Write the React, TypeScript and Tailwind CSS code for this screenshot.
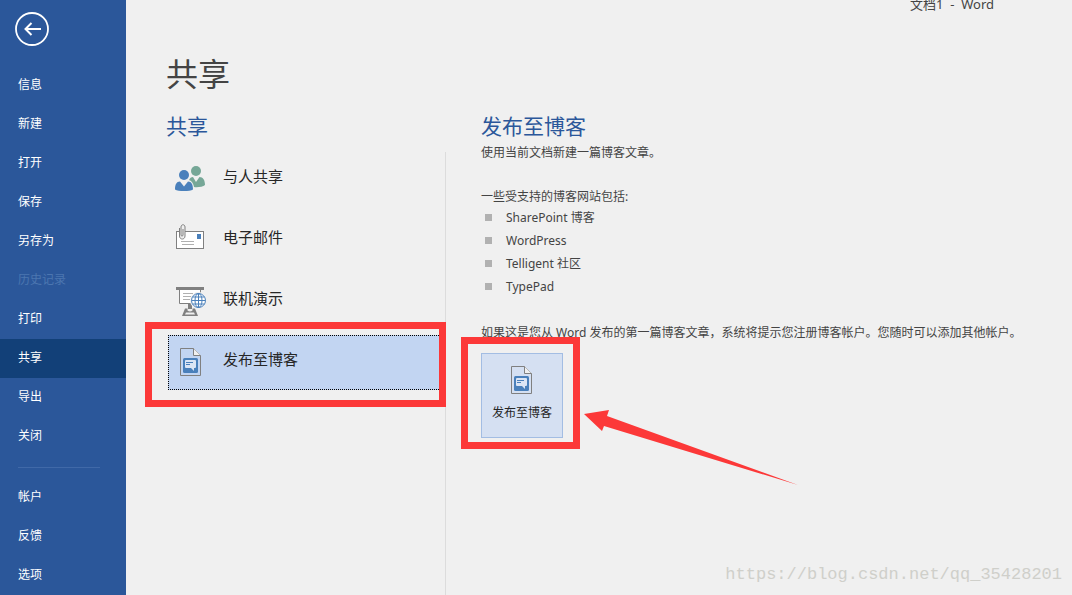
import type { ReactNode } from 'react';

const mainMenu = ['信息', '新建', '打开', '保存', '另存为', '历史记录', '打印', '共享', '导出', '关闭'];
const accountMenu = ['帐户', '反馈', '选项'];
const blogSites = ['SharePoint 博客', 'WordPress', 'Telligent 社区', 'TypePad'];

function PeopleIcon() {
  return (
    <svg viewBox="0 0 32 31" className="w-8 h-[31px]" aria-hidden="true">
      <g fill="#76a797">
        <circle cx="21" cy="7" r="5" />
        <path d="M14 16c1-2 2-3 4-3l3 5 3.500-5c3.500 0 5.500 3 5.500 8-2 2-8 2.500-11 2-.5-3-2-6-5-7z" />
      </g>
      <circle cx="9" cy="11" r="5.800" fill="#f0f0f0" />
      <g fill="#4a80bb">
        <circle cx="9" cy="11" r="5" />
        <path d="M5 17.500l4 5 4-5c3.500 0 5 3 5 8-3 2-15 2-18 0 0-5 1.500-8 5-8z" />
      </g>
    </svg>
  );
}

function MailIcon() {
  return (
    <svg viewBox="0 0 32 31" className="w-8 h-[31px] overflow-visible" fill="none" aria-hidden="true">
      <rect x="1.500" y="6.500" width="27" height="17" fill="#fff" stroke="#808080" />
      <rect x="22" y="9" width="4" height="5" fill="#4a80bb" />
      <path d="M6 16.500h13M7 19.500h12" stroke="#b0b0b0" />
      <path d="M4 1h6v12h-6z" fill="#f0f0f0" />
      <path d="M4.500 3v8c0 4 5.500 4 5.500 0V2c0-3-4-3-4 0v8c0 1.500 2 1.500 2 0V4" stroke="#808080" />
    </svg>
  );
}

function PresentIcon() {
  return (
    <svg viewBox="0 0 32 31" className="w-8 h-[31px]" fill="none" aria-hidden="true">
      <path d="M4.500 4v13.500h21V4" fill="#fff" stroke="#808080" />
      <path d="M1 1h28v3H1z" fill="#808080" />
      <path d="M8 7.500h10M8 10.500h8M8 13.500h7" stroke="#b0b0b0" />
      <path d="M13 18h4v5h-4z" fill="#808080" />
      <path d="M10 22.500h2.500v2q2.500 2 5 0v-2H20l3 7.500H7z" fill="#808080" />
      <path d="M11 26.500h8l1 2H10z" fill="#f0f0f0" />
      <circle cx="23.500" cy="14.500" r="8.500" fill="#f0f0f0" />
      <g stroke="#4a80bb">
        <circle cx="23.500" cy="14.500" r="7" fill="#fff" />
        <ellipse cx="23.500" cy="14.500" rx="3.500" ry="7" />
        <path d="M23.500 7.500v14M16.500 14.500h14M17.500 11h12M17.500 18h12" />
      </g>
    </svg>
  );
}

function BlogIcon() {
  return (
    <svg viewBox="0 0 32 31" className="w-8 h-[31px]" fill="none" aria-hidden="true">
      <path d="M5.500 1.500h13l7 7v20h-20z" stroke="#808080" />
      <path d="M18.500 1.500v7h7" fill="#f0f0f0" stroke="#808080" />
      <rect x="8" y="11" width="15" height="15" rx="1.500" fill="#4a80bb" />
      <path d="M11 13h9q1 0 1 1v6q0 1-1 1h-1v3l-3-3h-5q-1 0-1-1v-6q0-1 1-1z" fill="#dbe5f5" />
      <path d="M11 15.500h7M11 17.500h4" stroke="#4a80bb" />
    </svg>
  );
}

function MenuItem({ label }: { label: string }) {
  let look = 'text-white hover:bg-[#124078]';
  if (label === '共享') look = 'text-white bg-[#124078]';
  if (label === '历史记录') look = 'text-[#4c76b0]';

  return (
    <li>
      <a href="#" className={`flex items-center h-[39px] pl-[18px] pb-[2px] ${look}`}>
        {label}
      </a>
    </li>
  );
}

type ShareItemProps = {
  icon: ReactNode;
  label: string;
  selected?: boolean;
};

function ShareItem({ icon, label, selected }: ShareItemProps) {
  return (
    <li className="relative">
      <button
        type="button"
        className={`flex items-center gap-4 w-full h-[55px] pl-[6px] border border-dotted text-[15px] text-[#262626] ${
          selected ? 'bg-[#c2d5f2] border-black' : 'border-transparent'
        }`}
      >
        {icon}
        <span className="pb-2">{label}</span>
      </button>
      {selected && (
        <div className="absolute -left-[23px] -right-px -top-[13px] -bottom-[17px] border-[7px] border-[#fc3838] pointer-events-none" />
      )}
    </li>
  );
}

export default function App() {
  return (
    <div
      lang="zh-CN"
      className="relative flex min-h-screen bg-[#f0f0f0] text-[12px] leading-[18px] text-[#444] font-['Noto_Sans','Noto_Sans_CJK_SC',sans-serif]"
    >
      <aside className="w-[126px] shrink-0 bg-[#2b579a]">
        <button type="button" aria-label="返回" className="block ml-[15px] mt-3 mb-5">
          <svg viewBox="0 0 34 34" className="w-[34px] h-[34px]" fill="none" stroke="#fff">
            <circle cx="17" cy="17" r="16" strokeWidth="1.800" />
            <path d="M10.500 17H26M16.500 11l-6 6 6 6" strokeWidth="2" />
          </svg>
        </button>
        <ul>
          {mainMenu.map((label) => (
            <MenuItem key={label} label={label} />
          ))}
        </ul>
        <hr className="ml-[18px] mr-[26px] mt-[11px] mb-[10px] border-[#4069a8]" />
        <ul>
          {accountMenu.map((label) => (
            <MenuItem key={label} label={label} />
          ))}
        </ul>
      </aside>

      <main className="flex flex-col flex-1 min-w-0 pl-10">
        <div className="pr-[78px] text-right text-[13px] leading-[8px] whitespace-pre">文档1  -  Word</div>
        <h1 className="mt-[46px] text-[32px] leading-[40px]">共享</h1>

        <div className="flex flex-1 mt-[18px]">
          <section className="flex flex-col w-[280px] shrink-0">
            <h2 className="text-[21px] leading-[28px] text-[#2b579a]">共享</h2>
            <ul className="flex flex-col flex-1 gap-[6px] mt-3 pl-[2px] border-r border-[#dcdcdc]">
              <ShareItem icon={<PeopleIcon />} label="与人共享" />
              <ShareItem icon={<MailIcon />} label="电子邮件" />
              <ShareItem icon={<PresentIcon />} label="联机演示" />
              <ShareItem icon={<BlogIcon />} label="发布至博客" selected />
            </ul>
          </section>

          <section className="flex-1 min-w-0 pl-[35px]">
            <h2 className="text-[21px] leading-[28px] text-[#2b579a]">发布至博客</h2>
            <p className="mt-1">使用当前文档新建一篇博客文章。</p>
            <p className="mt-[26px]">一些受支持的博客网站包括:</p>
            <ul>
              {blogSites.map((site) => (
                <li key={site} className="flex items-center gap-[14px] h-[23px] pl-1">
                  <span className="w-[7px] h-[7px] bg-[#b1b1b1]" />
                  {site}
                </li>
              ))}
            </ul>
            <p className="mt-[26px]">
              如果这是您从 Word 发布的第一篇博客文章，系统将提示您注册博客帐户。您随时可以添加其他帐户。
            </p>

            <div className="relative w-[82px] mt-[11px]">
              <button
                type="button"
                className="flex flex-col items-center gap-2 w-full h-[85px] pt-[11px] border border-[#a3bde3] bg-[#d5e0f2] text-[#262626]"
              >
                <BlogIcon />
                发布至博客
              </button>
              <div className="absolute -left-5 -right-[17px] -top-4 -bottom-[11px] border-[7px] border-[#fc3838] pointer-events-none" />
              <svg
                viewBox="0 0 214 76"
                className="absolute left-[103px] top-[57px] w-[214px] h-[76px] max-w-none pointer-events-none"
                aria-hidden="true"
              >
                <path d="M0 4L25 0L23 6L214 75L20 16L18 21Z" fill="#fc3838" />
              </svg>
            </div>
          </section>
        </div>
      </main>

      <div className="absolute right-2.5 bottom-2 font-['Liberation_Mono',monospace] text-[17px] leading-6 text-[#cfcfca] pointer-events-none">
        https://blog.csdn.net/qq_35428201
      </div>
    </div>
  );
}
